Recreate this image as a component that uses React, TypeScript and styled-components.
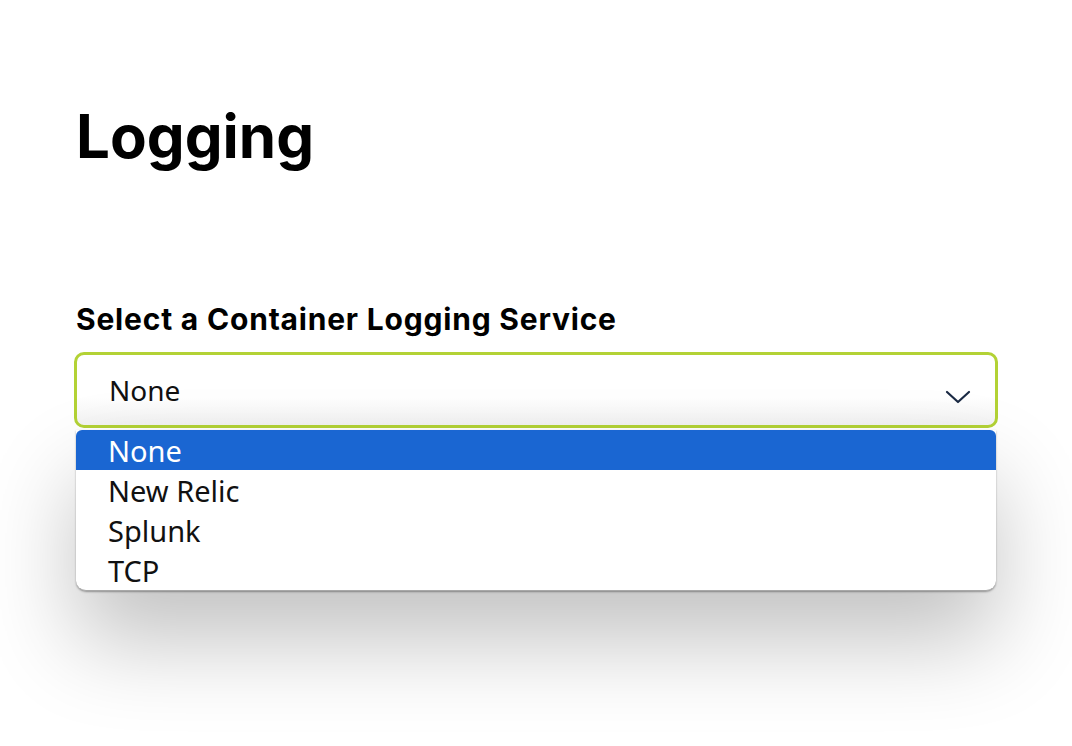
import React, { FC, useState } from 'react';
import styled, { createGlobalStyle } from 'styled-components';

const GlobalStyle = createGlobalStyle`
  html, body {
    margin: 0;
    padding: 0;
    background: #ffffff;
  }
  body {
    font-family: "Inter", "Noto Sans", sans-serif;
    color: #000;
  }
`;

const Page = styled.div`
  width: 1072px;
  height: 746px;
  box-sizing: border-box;
  padding: 96px 74px 0 74px;
  overflow: hidden;
`;

const Title = styled.h1`
  margin: 0 0 0 2px;
  font-family: "Inter", sans-serif;
  font-weight: 700;
  font-size: 60px;
  line-height: 80px;
`;

const Field = styled.div`
  margin-top: 125px;
  display: flex;
  flex-direction: column;
`;

const Label = styled.label`
  margin: 0 0 15px 2px;
  font-family: "Inter", sans-serif;
  font-weight: 700;
  font-size: 30px;
  line-height: 36px;
  letter-spacing: 0.8px;
`;

const SelectBox = styled.div`
  position: relative;
  width: 924px;
`;

const Trigger = styled.div`
  height: 76px;
  box-sizing: border-box;
  border: 3px solid #b3d235;
  border-radius: 10px;
  background: linear-gradient(to bottom, #ffffff 60%, #f3f3f3 100%);
  display: flex;
  align-items: center;
  justify-content: space-between;
  padding: 0 24px 0 32px;
  font-family: "Noto Sans", sans-serif;
  font-size: 28px;
  color: #111;
`;

const Chevron = styled.svg`
  width: 26px;
  height: 16px;
  margin-top: 14px;
`;

const Menu = styled.ul`
  position: absolute;
  left: 2px;
  right: 2px;
  top: 78px;
  margin: 0;
  padding: 0;
  list-style: none;
  background: #fff;
  border-radius: 0 0 10px 10px;
  border-bottom: 1px solid #a8a8a8;
  box-shadow: 0 1px 2px rgba(0, 0, 0, 0.35), 0 50px 90px rgba(0, 0, 0, 0.24);
  overflow: hidden;
`;

const Option = styled.li<{ selected: boolean }>`
  height: 40px;
  display: flex;
  align-items: center;
  padding-left: 32px;
  font-family: "Noto Sans", sans-serif;
  font-size: 29px;
  color: ${ props => (props.selected ? '#ffffff' : '#111111') };
  background: ${ props => (props.selected ? '#1a66d2' : 'transparent') };
  border-radius: ${ props => (props.selected ? '6px 6px 0 0' : '0') };
`;

const services = ['None', 'New Relic', 'Splunk', 'TCP'];

const App: FC = () => {
  const [value, setValue] = useState<string>('None');

  return (
    <Page>
      <GlobalStyle />
      <Title>Logging</Title>
      <Field>
        <Label>Select a Container Logging Service</Label>
        <SelectBox>
          <Trigger>
            <span>{ value }</span>
            <Chevron viewBox="0 0 26 16" fill="none">
              <path d="M2 3 L13 13 L24 3" stroke="#1b2a44" strokeWidth="2.2" strokeLinecap="round" strokeLinejoin="round" />
            </Chevron>
          </Trigger>
          <Menu>
            { services.map(s => (
              <Option key={ s } selected={ s === value } onClick={ () => setValue(s) }>{ s }</Option>
            )) }
          </Menu>
        </SelectBox>
      </Field>
    </Page>
  );
};

export default App;
